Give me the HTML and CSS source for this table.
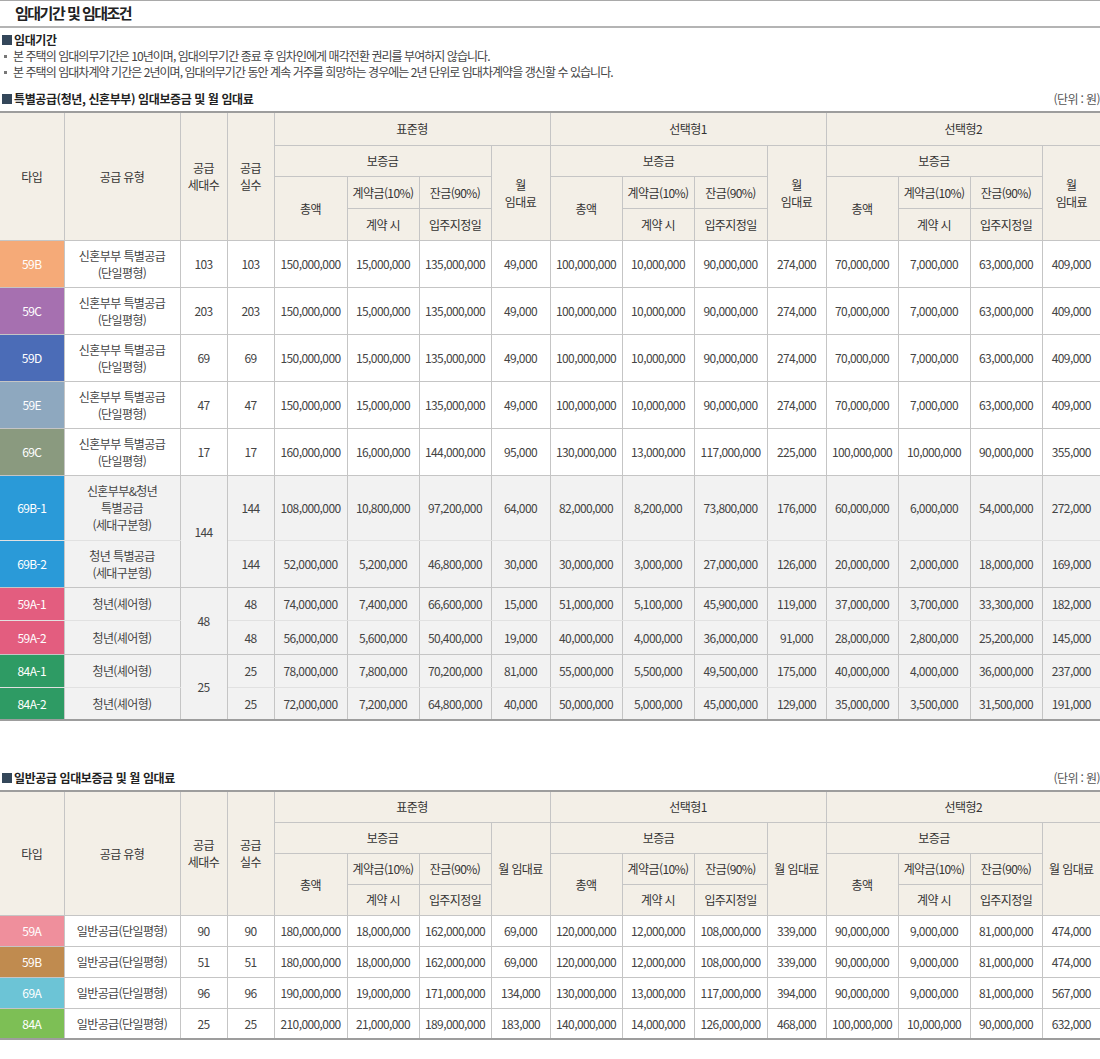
FILE: index.html
```html
<!DOCTYPE html>
<html lang="ko">
<head>
<meta charset="utf-8">
<title>임대기간 및 임대조건</title>
<link rel="stylesheet" href="styles.css">
</head>
<body>
<div class="page">
  <h1 class="page-title">임대기간 및 임대조건</h1>

  <h2 class="sec-title first">임대기간</h2>
  <ul class="notes">
    <li>본 주택의 임대의무기간은 10년이며, 임대의무기간 종료 후 임차인에게 매각전환 권리를 부여하지 않습니다.</li>
    <li>본 주택의 임대차계약 기간은 2년이며, 임대의무기간 동안 계속 거주를 희망하는 경우에는 2년 단위로 임대차계약을 갱신할 수 있습니다.</li>
  </ul>

  <div class="sec-head">
    <h2 class="sec-title">특별공급(청년, 신혼부부) 임대보증금 및 월 임대료</h2>
    <span class="unit">(단위 : 원)</span>
  </div>

  <table class="rent">
    <colgroup>
      <col class="w64"><col class="w116"><col class="w47"><col class="w47">
      <col class="w73"><col class="w72"><col class="w72"><col class="w59">
      <col class="w72"><col class="w72"><col class="w73"><col class="w59">
      <col class="w72"><col class="w72"><col class="w72"><col class="w58">
    </colgroup>
    <thead>
      <tr class="h33">
        <th rowspan="4">타입</th>
        <th rowspan="4">공급 유형</th>
        <th rowspan="4">공급<br>세대수</th>
        <th rowspan="4">공급<br>실수</th>
        <th colspan="4">표준형</th>
        <th colspan="4">선택형1</th>
        <th colspan="4">선택형2</th>
      </tr>
      <tr class="h31">
        <th colspan="3">보증금</th><th rowspan="3">월<br>임대료</th>
        <th colspan="3">보증금</th><th rowspan="3">월<br>임대료</th>
        <th colspan="3">보증금</th><th rowspan="3">월<br>임대료</th>
      </tr>
      <tr class="h32">
        <th rowspan="2">총액</th><th>계약금(10%)</th><th>잔금(90%)</th>
        <th rowspan="2">총액</th><th>계약금(10%)</th><th>잔금(90%)</th>
        <th rowspan="2">총액</th><th>계약금(10%)</th><th>잔금(90%)</th>
      </tr>
      <tr class="h32">
        <th>계약 시</th><th>입주지정일</th>
        <th>계약 시</th><th>입주지정일</th>
        <th>계약 시</th><th>입주지정일</th>
      </tr>
    </thead>
    <tbody>
      <tr class="h47">
        <td class="type t-59b">59B</td><td>신혼부부 특별공급<br>(단일평형)</td><td>103</td><td>103</td>
        <td>150,000,000</td><td>15,000,000</td><td>135,000,000</td><td>49,000</td>
        <td>100,000,000</td><td>10,000,000</td><td>90,000,000</td><td>274,000</td>
        <td>70,000,000</td><td>7,000,000</td><td>63,000,000</td><td>409,000</td>
      </tr>
      <tr class="h47">
        <td class="type t-59c">59C</td><td>신혼부부 특별공급<br>(단일평형)</td><td>203</td><td>203</td>
        <td>150,000,000</td><td>15,000,000</td><td>135,000,000</td><td>49,000</td>
        <td>100,000,000</td><td>10,000,000</td><td>90,000,000</td><td>274,000</td>
        <td>70,000,000</td><td>7,000,000</td><td>63,000,000</td><td>409,000</td>
      </tr>
      <tr class="h47">
        <td class="type t-59d">59D</td><td>신혼부부 특별공급<br>(단일평형)</td><td>69</td><td>69</td>
        <td>150,000,000</td><td>15,000,000</td><td>135,000,000</td><td>49,000</td>
        <td>100,000,000</td><td>10,000,000</td><td>90,000,000</td><td>274,000</td>
        <td>70,000,000</td><td>7,000,000</td><td>63,000,000</td><td>409,000</td>
      </tr>
      <tr class="h47">
        <td class="type t-59e">59E</td><td>신혼부부 특별공급<br>(단일평형)</td><td>47</td><td>47</td>
        <td>150,000,000</td><td>15,000,000</td><td>135,000,000</td><td>49,000</td>
        <td>100,000,000</td><td>10,000,000</td><td>90,000,000</td><td>274,000</td>
        <td>70,000,000</td><td>7,000,000</td><td>63,000,000</td><td>409,000</td>
      </tr>
      <tr class="h47">
        <td class="type t-69c">69C</td><td>신혼부부 특별공급<br>(단일평형)</td><td>17</td><td>17</td>
        <td>160,000,000</td><td>16,000,000</td><td>144,000,000</td><td>95,000</td>
        <td>130,000,000</td><td>13,000,000</td><td>117,000,000</td><td>225,000</td>
        <td>100,000,000</td><td>10,000,000</td><td>90,000,000</td><td>355,000</td>
      </tr>
      <tr class="h65 gray grp-a">
        <td class="type t-69b">69B-1</td><td>신혼부부&amp;청년<br>특별공급<br>(세대구분형)</td><td class="span" rowspan="2">144</td><td>144</td>
        <td>108,000,000</td><td>10,800,000</td><td>97,200,000</td><td>64,000</td>
        <td>82,000,000</td><td>8,200,000</td><td>73,800,000</td><td>176,000</td>
        <td>60,000,000</td><td>6,000,000</td><td>54,000,000</td><td>272,000</td>
      </tr>
      <tr class="h47 gray grp-b">
        <td class="type t-69b">69B-2</td><td>청년 특별공급<br>(세대구분형)</td><td>144</td>
        <td>52,000,000</td><td>5,200,000</td><td>46,800,000</td><td>30,000</td>
        <td>30,000,000</td><td>3,000,000</td><td>27,000,000</td><td>126,000</td>
        <td>20,000,000</td><td>2,000,000</td><td>18,000,000</td><td>169,000</td>
      </tr>
      <tr class="h33 gray grp-a">
        <td class="type t-59a">59A-1</td><td>청년(셰어형)</td><td class="span" rowspan="2">48</td><td>48</td>
        <td>74,000,000</td><td>7,400,000</td><td>66,600,000</td><td>15,000</td>
        <td>51,000,000</td><td>5,100,000</td><td>45,900,000</td><td>119,000</td>
        <td>37,000,000</td><td>3,700,000</td><td>33,300,000</td><td>182,000</td>
      </tr>
      <tr class="h34 gray grp-b">
        <td class="type t-59a">59A-2</td><td>청년(셰어형)</td><td>48</td>
        <td>56,000,000</td><td>5,600,000</td><td>50,400,000</td><td>19,000</td>
        <td>40,000,000</td><td>4,000,000</td><td>36,000,000</td><td>91,000</td>
        <td>28,000,000</td><td>2,800,000</td><td>25,200,000</td><td>145,000</td>
      </tr>
      <tr class="h33 gray grp-a">
        <td class="type t-84a">84A-1</td><td>청년(셰어형)</td><td class="span" rowspan="2">25</td><td>25</td>
        <td>78,000,000</td><td>7,800,000</td><td>70,200,000</td><td>81,000</td>
        <td>55,000,000</td><td>5,500,000</td><td>49,500,000</td><td>175,000</td>
        <td>40,000,000</td><td>4,000,000</td><td>36,000,000</td><td>237,000</td>
      </tr>
      <tr class="h33 gray grp-b">
        <td class="type t-84a">84A-2</td><td>청년(셰어형)</td><td>25</td>
        <td>72,000,000</td><td>7,200,000</td><td>64,800,000</td><td>40,000</td>
        <td>50,000,000</td><td>5,000,000</td><td>45,000,000</td><td>129,000</td>
        <td>35,000,000</td><td>3,500,000</td><td>31,500,000</td><td>191,000</td>
      </tr>
    </tbody>
  </table>

  <div class="sec-head second">
    <h2 class="sec-title">일반공급 임대보증금 및 월 임대료</h2>
    <span class="unit">(단위 : 원)</span>
  </div>

  <table class="rent">
    <colgroup>
      <col class="w64"><col class="w116"><col class="w47"><col class="w47">
      <col class="w73"><col class="w72"><col class="w72"><col class="w59">
      <col class="w72"><col class="w72"><col class="w73"><col class="w59">
      <col class="w72"><col class="w72"><col class="w72"><col class="w58">
    </colgroup>
    <thead>
      <tr class="h31">
        <th rowspan="4">타입</th>
        <th rowspan="4">공급 유형</th>
        <th rowspan="4">공급<br>세대수</th>
        <th rowspan="4">공급<br>실수</th>
        <th colspan="4">표준형</th>
        <th colspan="4">선택형1</th>
        <th colspan="4">선택형2</th>
      </tr>
      <tr class="h31">
        <th colspan="3">보증금</th><th rowspan="3">월 임대료</th>
        <th colspan="3">보증금</th><th rowspan="3">월 임대료</th>
        <th colspan="3">보증금</th><th rowspan="3">월 임대료</th>
      </tr>
      <tr class="h31">
        <th rowspan="2">총액</th><th>계약금(10%)</th><th>잔금(90%)</th>
        <th rowspan="2">총액</th><th>계약금(10%)</th><th>잔금(90%)</th>
        <th rowspan="2">총액</th><th>계약금(10%)</th><th>잔금(90%)</th>
      </tr>
      <tr class="h31">
        <th>계약 시</th><th>입주지정일</th>
        <th>계약 시</th><th>입주지정일</th>
        <th>계약 시</th><th>입주지정일</th>
      </tr>
    </thead>
    <tbody>
      <tr class="h31">
        <td class="type g-59a">59A</td><td>일반공급(단일평형)</td><td>90</td><td>90</td>
        <td>180,000,000</td><td>18,000,000</td><td>162,000,000</td><td>69,000</td>
        <td>120,000,000</td><td>12,000,000</td><td>108,000,000</td><td>339,000</td>
        <td>90,000,000</td><td>9,000,000</td><td>81,000,000</td><td>474,000</td>
      </tr>
      <tr class="h31">
        <td class="type g-59b">59B</td><td>일반공급(단일평형)</td><td>51</td><td>51</td>
        <td>180,000,000</td><td>18,000,000</td><td>162,000,000</td><td>69,000</td>
        <td>120,000,000</td><td>12,000,000</td><td>108,000,000</td><td>339,000</td>
        <td>90,000,000</td><td>9,000,000</td><td>81,000,000</td><td>474,000</td>
      </tr>
      <tr class="h31">
        <td class="type g-69a">69A</td><td>일반공급(단일평형)</td><td>96</td><td>96</td>
        <td>190,000,000</td><td>19,000,000</td><td>171,000,000</td><td>134,000</td>
        <td>130,000,000</td><td>13,000,000</td><td>117,000,000</td><td>394,000</td>
        <td>90,000,000</td><td>9,000,000</td><td>81,000,000</td><td>567,000</td>
      </tr>
      <tr class="h31">
        <td class="type g-84a">84A</td><td>일반공급(단일평형)</td><td>25</td><td>25</td>
        <td>210,000,000</td><td>21,000,000</td><td>189,000,000</td><td>183,000</td>
        <td>140,000,000</td><td>14,000,000</td><td>126,000,000</td><td>468,000</td>
        <td>100,000,000</td><td>10,000,000</td><td>90,000,000</td><td>632,000</td>
      </tr>
    </tbody>
  </table>
</div>
</body>
</html>
```

FILE: styles.css
```css
* { box-sizing: border-box; }

body {
  margin: 0;
  background: #fff;
  color: #444;
  font-family: "Noto Sans CJK KR", "Noto Sans", sans-serif;
}

.page { width: 1100px; }

.page-title {
  margin: 0;
  height: 28px;
  padding-left: 15px;
  border-top: 1px solid #a9a9a9;
  border-bottom: 2px solid #b4b4b4;
  font-size: 15px;
  line-height: 24px;
  font-weight: 700;
  color: #222;
  letter-spacing: -1.5px;
}

.sec-title {
  margin: 0;
  display: flex;
  align-items: center;
  font-size: 12px;
  line-height: 16px;
  font-weight: 700;
  color: #222;
  letter-spacing: -0.4px;
}
.sec-title::before {
  content: "";
  width: 10px;
  height: 10px;
  margin: 0 2px 0 2px;
  background: #34475a;
}
.sec-title.first { margin-top: 4px; }

.notes {
  list-style: none;
  margin: 0;
  padding: 0;
  font-size: 12px;
  line-height: 16px;
  letter-spacing: -0.95px;
  color: #444;
}
.notes li { display: flex; align-items: center; }
.notes li::before {
  content: "";
  flex: none;
  width: 3px;
  height: 3px;
  margin: 0 6px 0 4px;
  background: #777;
}

.sec-head {
  margin-top: 11px;
  display: flex;
  justify-content: space-between;
  align-items: center;
}
.sec-head.second { margin-top: 49px; }
.unit {
  font-size: 12px;
  line-height: 16px;
  color: #555;
  letter-spacing: -0.6px;
}

.rent {
  margin-top: 4px;
  width: 1100px;
  table-layout: fixed;
  border-collapse: collapse;
  border-top: 2px solid #9d9d9d;
  border-bottom: 2px solid #9d9d9d;
  border-left: hidden;
  border-right: hidden;
  font-size: 12px;
  letter-spacing: -0.6px;
}
.rent th,
.rent td {
  padding: 0;
  border: 1px solid #c5c5c5;
  text-align: center;
  vertical-align: middle;
  line-height: 17px;
  white-space: nowrap;
}
.rent th {
  background: #f3efe7;
  color: #333;
  font-weight: 400;
}
.rent td { background: #fff; color: #444; }
.rent .gray td { background: #f2f2f2; }
.rent .grp-a td:not(.span) { border-bottom-color: #e1e1e1; }
.rent .grp-b td { border-top-color: #e1e1e1; }

.w64 { width: 64px; }
.w116 { width: 116px; }
.w47 { width: 47px; }
.w73 { width: 73px; }
.w72 { width: 72px; }
.w59 { width: 59px; }
.w58 { width: 58px; }

.h31 { height: 31px; }
.h32 { height: 32px; }
.h33 { height: 33px; }
.h34 { height: 34px; }
.h47 { height: 47px; }
.h65 { height: 65px; }

.rent td.type { color: #fff; }
.rent td.t-59b { background: #f5aa78; }
.rent td.t-59c { background: #a670b0; }
.rent td.t-59d { background: #4b6cb7; }
.rent td.t-59e { background: #8ea8bf; }
.rent td.t-69c { background: #8a9a7f; }
.rent .gray td.t-69b { background: #2a9ad8; }
.rent .gray td.t-59a { background: #e35d7f; }
.rent .gray td.t-84a { background: #2e9b64; }
.rent td.g-59a { background: #ef8f9c; }
.rent td.g-59b { background: #c08b4f; }
.rent td.g-69a { background: #6cc4d6; }
.rent td.g-84a { background: #7dbf55; }
```
